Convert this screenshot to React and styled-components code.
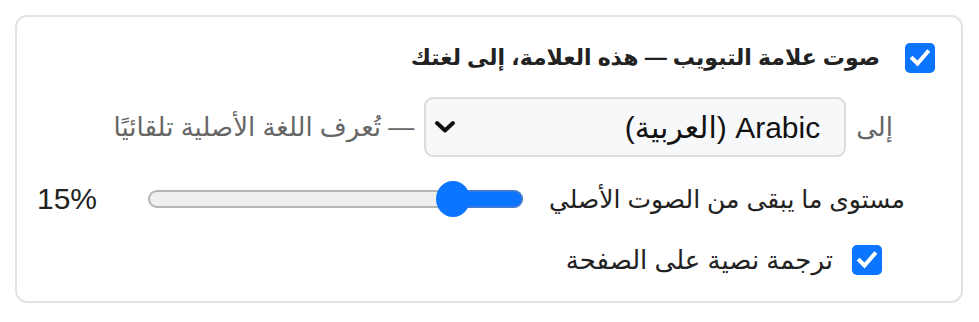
import React from 'react';
import styled, { createGlobalStyle } from 'styled-components';

const GlobalStyle = createGlobalStyle`
	html, body {
		margin: 0;
		padding: 0;
		background: #ffffff;
	}
	body {
		font-family: "Liberation Sans", "DejaVu Sans", sans-serif;
		color: #222222;
	}
`

const Card = styled.div`
	direction: rtl;
	margin: 15px 16px 0 15px;
	border: 2px solid #e3e3e3;
	border-radius: 12px;
	padding: 26px 26px 26px 20px;
	display: flex;
	flex-direction: column;
`

const Row = styled.div`
	display: flex;
	align-items: center;
	gap: ${p => p.gap || 20}px;
	margin-right: ${p => p.indent || 0}px;
	margin-top: ${p => p.top || 0}px;
	height: ${p => p.h || 30}px;
`

const Box = styled.span`
	flex: none;
	width: 30px;
	height: 30px;
	border-radius: 5px;
	background: #0b75ff;
	display: flex;
	align-items: center;
	justify-content: center;

	svg {
		display: block;
	}
`

const Label = styled.span`
	font-size: ${p => p.size || 26}px;
	font-weight: ${p => (p.bold ? 700 : 400)};
	color: ${p => (p.muted ? '#666666' : '#222222')};
	white-space: nowrap;
`

const Select = styled.div`
	flex: none;
	width: 422px;
	height: 60px;
	box-sizing: border-box;
	border: 2px solid #dcdcdc;
	border-radius: 9px;
	background: #f7f8fa;
	display: flex;
	align-items: center;
	justify-content: space-between;
	padding: 0 24px 0 8px;
	font-size: 30px;
	color: #111111;

	svg {
		display: block;
	}
`

const Track = styled.div`
	position: relative;
	flex: none;
	width: 375px;
	height: 18px;
	box-sizing: border-box;
	border: 2px solid #b5b5b5;
	border-radius: 9px;
	background: #efefef;
`

const Fill = styled.div`
	position: absolute;
	top: -2px;
	right: -2px;
	bottom: -2px;
	box-sizing: border-box;
	border: 2px solid #3c7ad6;
	border-radius: 9px;
	background: #0b75ff;
`

const Thumb = styled.div`
	position: absolute;
	top: 50%;
	width: 34px;
	height: 36px;
	margin-top: -18px;
	margin-right: -17px;
	border-radius: 50%;
	background: #0b75ff;
`

const Value = styled.span`
	margin-right: auto;
	font-size: 30px;
	color: #222222;
`

const Check = () => (
	<Box>
		<svg width="22" height="22" viewBox="0 0 22 22">
			<path d="M3.5 11.5 L8.5 16.5 L18.5 5" fill="none" stroke="#ffffff" strokeWidth="4" strokeLinecap="square" />
		</svg>
	</Box>
);

const Slider = ({ value }) => {
	const travel = 375 - 34;
	const pos = 17 + (travel * value) / 100;
	return (
		<Track>
			<Fill style={{ width: pos + 2 }} />
			<Thumb style={{ right: pos }} />
		</Track>
	);
};

export default function App() {
	return (
		<>
			<GlobalStyle />
			<Card>
				<Row gap={25}>
					<Check />
					<Label bold size={22}>صوت علامة التبويب — هذه العلامة، إلى لغتك</Label>
				</Row>

				<Row indent={42} top={24} h={60} gap={10}>
					<Label muted>إلى</Label>
					<Select>
						<span>Arabic (العربية)</span>
						<svg width="22" height="14" viewBox="0 0 22 14">
							<path d="M3 3 L11 10.5 L19 3" fill="none" stroke="#111111" strokeWidth="4" strokeLinecap="round" strokeLinejoin="round" />
						</svg>
					</Select>
					<Label muted>— تُعرف اللغة الأصلية تلقائيًا</Label>
				</Row>

				<Row indent={30} top={24} h={36} gap={26}>
					<Label size={25}>مستوى ما يبقى من الصوت الأصلي</Label>
					<Slider value={15} />
					<Value>15%</Value>
				</Row>

				<Row indent={53} top={28} gap={19}>
					<Check />
					<Label>ترجمة نصية على الصفحة</Label>
				</Row>
			</Card>
		</>
	);
}
